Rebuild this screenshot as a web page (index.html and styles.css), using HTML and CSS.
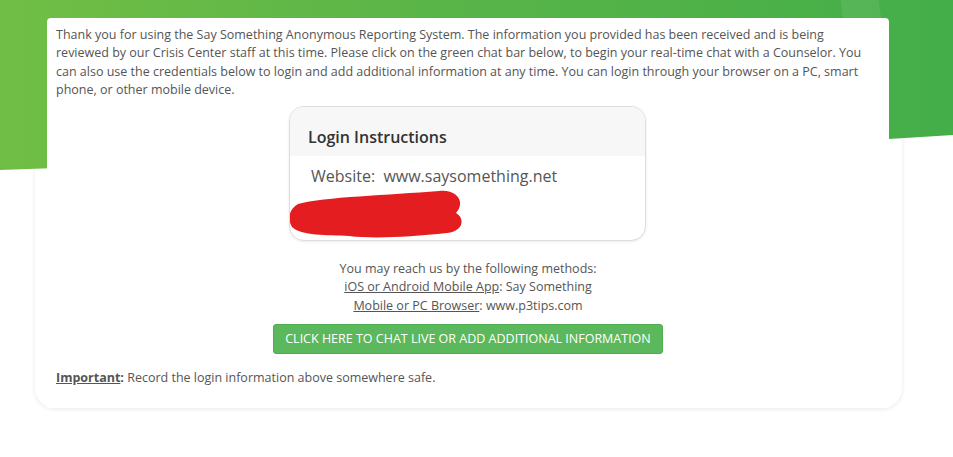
FILE: index.html
```html
<!DOCTYPE html>
<html lang="en">
<head>
<meta charset="utf-8">
<title>Say Something - Report Submitted</title>
<link rel="stylesheet" href="styles.css">
</head>
<body>
<div class="page">
  <div class="banner"><span class="banner-glint"></span></div>
  <div class="shell">
    <div class="content">
      <p class="intro">Thank you for using the Say Something Anonymous Reporting System. The information you provided has been received and is being reviewed by our Crisis Center staff at this time. Please click on the green chat bar below, to begin your real-time chat with a Counselor. You can also use the credentials below to login and add additional information at any time. You can login through your browser on a PC, smart phone, or other mobile device.</p>

      <div class="login-panel">
        <div class="login-heading">Login Instructions</div>
        <div class="login-body">
          <div class="login-line">Website:&nbsp; www.saysomething.net</div>
          <svg class="redaction" width="174" height="50" viewBox="0 0 174 50" aria-hidden="true">
            <path d="M 9 15 C 35 8, 100 6, 150 2 C 168 0, 177 13, 167 24 C 176 29, 175 42, 158 44 C 120 48, 85 50, 60 47 C 38 46, 12 47, 3 38 C -2 30, 0 20, 9 15 Z" fill="#e41e20"/>
          </svg>
        </div>
      </div>

      <div class="methods">
        <div>You may reach us by the following methods:</div>
        <div><u>iOS or Android Mobile App</u>: Say Something</div>
        <div><u>Mobile or PC Browser</u>: www.p3tips.com</div>
      </div>

      <div class="cta-row">
        <button class="cta" type="button">CLICK HERE TO CHAT LIVE OR ADD ADDITIONAL INFORMATION</button>
      </div>

      <p class="important"><b><u>Important</u>:</b> Record the login information above somewhere safe.</p>
    </div>
  </div>
</div>
</body>
</html>
```

FILE: styles.css
```css
html, body {
  margin: 0;
  padding: 0;
  background: #ffffff;
}

body {
  font-family: "Open Sans", "Liberation Sans", sans-serif;
  font-size: 12.5px;
  line-height: 18.3px;
  color: #555555;
}

.page {
  position: relative;
  width: 953px;
  min-height: 457px;
  padding-top: 18px;
  box-sizing: border-box;
}

.banner {
  position: absolute;
  top: 0;
  left: 0;
  width: 953px;
  height: 170px;
  background: linear-gradient(90deg, #71be45 0%, #5ab548 45%, #44ae48 100%);
  clip-path: polygon(0 0, 100% 0, 100% 135px, 889px 139px, 0 170px);
  z-index: 1;
  overflow: hidden;
}

.banner-glint {
  position: absolute;
  top: -20px;
  left: 842px;
  width: 38px;
  height: 60px;
  background: rgba(255, 255, 255, 0.08);
  transform: skewX(8deg);
}

.shell {
  margin-left: 35px;
  width: 867px;
  padding: 0 13px 0 12px;
  box-sizing: border-box;
  background: #ffffff;
  border-radius: 0 0 20px 20px;
  box-shadow: 0 1px 5px rgba(0, 0, 0, 0.09);
}

.content {
  position: relative;
  z-index: 2;
  background: #ffffff;
  border-radius: 4px 4px 0 0;
  padding: 8px 20px 21px 9px;
}

.intro {
  margin: 0;
}

.login-panel {
  width: 357px;
  margin: 7px 0 0 233px;
  box-sizing: border-box;
  border: 1px solid #dddddd;
  border-radius: 15px;
  overflow: hidden;
  background: #ffffff;
  box-shadow: 0 1px 3px rgba(0, 0, 0, 0.08);
}

.login-heading {
  background: #f7f7f7;
  padding: 19px 18px 8px;
  font-size: 16px;
  line-height: 22px;
  font-weight: 600;
  color: #333333;
}

.login-body {
  padding: 9px 0 1px 21px;
}

.login-line {
  font-size: 16px;
  line-height: 22px;
  color: #555555;
}

.redaction {
  display: block;
  margin: 2px 0 0 -22px;
}

.methods {
  margin: 19px -11px 0 0;
  text-align: center;
}

.cta-row {
  display: flex;
  justify-content: center;
  margin: 9px -11px 0 0;
}

.cta {
  font-family: "Open Sans", "Liberation Sans", sans-serif;
  font-size: 12.5px;
  line-height: 18px;
  color: #ffffff;
  background: #5cb85c;
  border: 1px solid #4cae4c;
  border-radius: 3px;
  padding: 5px 11px;
  white-space: nowrap;
  cursor: pointer;
}

.important {
  margin: 15px 0 0;
}

.important b {
  font-weight: 700;
}
```
